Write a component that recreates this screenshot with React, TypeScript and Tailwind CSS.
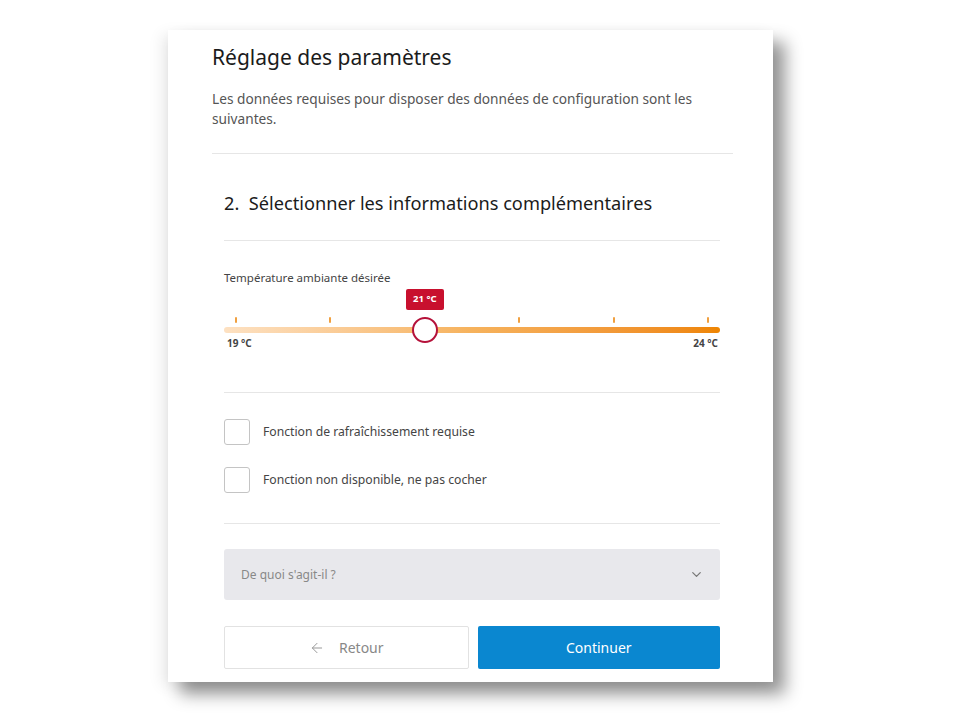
import React, { useState } from 'react';
import { ArrowLeft, ChevronDown } from 'lucide-react';

const ticks = [0, 1, 2, 3, 4, 5];

const App: React.FC = () => {
  const [checks, setChecks] = useState([false, false]);
  const value = 21;
  const min = 19;
  const max = 24;
  // thumb center in px within a 496px track (12px inset each side)
  const pos = (v: number) => 12 + ((v - min) / (max - min)) * 472;

  return (
    <div className="min-h-[720px] w-[960px] bg-white pl-[168px] pt-[30px] font-['Noto_Sans','Liberation_Sans',sans-serif]">
      <div className="w-[605px] h-[652px] bg-white shadow-[12px_12px_16px_rgba(0,0,0,0.42),-6px_4px_14px_rgba(0,0,0,0.08)] pl-[44px] pr-[40px] pt-[12px]">
        <h1 className="text-[21px] leading-[30px] text-[#1b1b1b]">Réglage des paramètres</h1>
        <p className="mt-[17px] text-[13.7px] leading-[20px] text-[#555]">
          Les données requises pour disposer des données de configuration sont les suivantes.
        </p>
        <div className="mt-[24px] h-px bg-[#e6e6e6]" />

        <div className="ml-[12px] mr-[13px]">
          <h2 className="mt-[36px] text-[18.2px] leading-[26px] text-[#1b1b1b]">
            2.&nbsp; Sélectionner les informations complémentaires
          </h2>
          <div className="mt-[24px] h-px bg-[#e6e6e6]" />

          <div className="mt-[29px] text-[11.5px] leading-[16px] text-[#444]">Température ambiante désirée</div>

          <div className="relative mt-[3px] h-[62px]">
            <div className="absolute left-0 right-0 top-[38px] h-[6px] rounded-full bg-gradient-to-r from-[#fde1c2] via-[#f6b25c] to-[#ee8500]" />
            {ticks.map((i) => (
              <div
                key={i}
                className="absolute top-[28px] h-[6px] w-[2px] rounded-full bg-[#f0a040]"
                style={{ left: pos(min + i) - 1 }}
              />
            ))}
            <div
              className="absolute top-0 h-[21px] w-[38px] -translate-x-1/2 rounded-[2px] bg-[#c8102e] flex items-center justify-center text-[9.5px] font-bold text-white"
              style={{ left: pos(value) }}
            >
              21 °C
            </div>
            <div
              className="absolute top-[28px] h-[26px] w-[26px] -translate-x-1/2 rounded-full border-2 border-[#b5123a] bg-white"
              style={{ left: pos(value) }}
            />
            <div className="absolute left-[3px] top-[48px] text-[10px] leading-[12px] font-bold text-[#444]">19 °C</div>
            <div className="absolute right-[2px] top-[48px] text-[10px] leading-[12px] font-bold text-[#444]">24 °C</div>
          </div>

          <div className="mt-[41px] h-px bg-[#e6e6e6]" />

          <div className="mt-[26px] flex flex-col gap-[22px]">
            {['Fonction de rafraîchissement requise', 'Fonction non disponible, ne pas cocher'].map((label, i) => (
              <label key={label} className="flex items-center gap-[13px] cursor-pointer">
                <span
                  onClick={() => setChecks((c) => c.map((v, j) => (j === i ? !v : v)))}
                  className={`h-[26px] w-[26px] rounded-[3px] border-[1.5px] ${checks[i] ? 'border-[#0a87d0] bg-[#0a87d0]' : 'border-[#c4c4c4] bg-white'}`}
                />
                <span className="text-[12.2px] text-[#444]">{label}</span>
              </label>
            ))}
          </div>

          <div className="mt-[30px] h-px bg-[#e6e6e6]" />

          <button className="mt-[25px] flex h-[51px] w-full items-center justify-between rounded-[3px] bg-[#e8e8ec] pl-[17px] pr-[16px] text-[12px] text-[#888]">
            <span>De quoi s'agit-il ?</span>
            <ChevronDown size={15} className="text-[#777]" />
          </button>

          <div className="mt-[26px] flex gap-[9px]">
            <button className="flex h-[43px] flex-1 items-center justify-center gap-[14px] rounded-[2px] border border-[#e2e2e2] bg-white text-[14px] text-[#888]">
              <ArrowLeft size={16} strokeWidth={1.5} className="text-[#999]" />
              Retour
            </button>
            <button className="flex h-[43px] flex-1 items-center justify-center rounded-[2px] bg-[#0a87d0] text-[14px] text-white">
              Continuer
            </button>
          </div>
        </div>
      </div>
    </div>
  );
};

export default App;
